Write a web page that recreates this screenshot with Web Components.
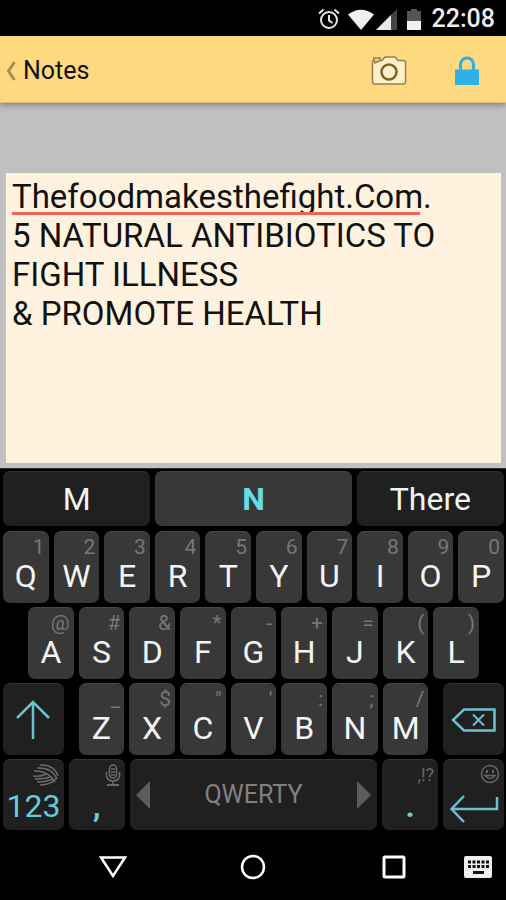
<!DOCTYPE html>
<html lang="en">
<head>
<meta charset="utf-8">
<meta name="viewport" content="width=device-width, initial-scale=1">
<title>Notes</title>
<style>
  body{ margin:0; background:#000; font-family:Roboto,sans-serif }
</style>
</head>
<body>
<notes-app>
  <status-bar slot="status" time="22:08"></status-bar>
  <app-bar slot="bar" back="Notes"></app-bar>
  <note-editor></note-editor>
  <soft-keyboard slot="keyboard"></soft-keyboard>
  <nav-bar slot="nav"></nav-bar>
</notes-app>

<script>
const ICONS = {
  alarm: [22, 22, `<g fill="none" stroke="#e4e4e4" stroke-width="2"><circle cx="11" cy="12" r="8"/><path d="M11 7v5.500l3.500 2.500M1 5.500l4.500-4M21 5.500l-4.500-4"/></g>`],
  wifi: [26, 21, `<path d="M0 5.500Q13-4 26 5.500L13 21z" fill="#f0f0f0"/>`],
  signal: [21, 21, `<path d="M21 0v21H0z" fill="#444"/><path d="M15 6v15H0z" fill="#e8e8e8"/>`],
  battery: [14, 21, `<path d="M4 0h6v2h4v10H0V2h4z" fill="#555"/><path d="M0 12h14v9H0z" fill="#f0f0f0"/>`],
  back: [10, 20, `<path d="M8.500 1L2.500 10l6 9" fill="none" stroke="#a58c58" stroke-width="3"/>`],
  camera: [36, 30, `<g stroke="#97804c" stroke-width="1.500" fill="#fff0ca"><path d="M3 4.500h8L14 1h10l3 3.500h5.500q2 0 2 2V26q0 2-2 2h-29q-2 0-2-2V6.500q0-2 1.500-2z"/><path d="M3 4V2h6v2.500L4 7z" fill="#e8d29a"/><circle cx="18" cy="16" r="7.500" stroke="#7d6426" stroke-width="2.500"/></g>`],
  lock: [24, 29, `<path d="M5.500 14V8.500a6.500 6.500 0 0 1 13 0V14" fill="none" stroke="#2fb1e6" stroke-width="3.200"/><path d="M0 13.500h24V29H0z" fill="#2fb1e6"/>`],
  shift: [36, 40, `<path d="M18 39V2M2 18L18 2l16 16" fill="none" stroke="#68c3cf" stroke-width="2.500"/>`],
  erase: [45, 24, `<g fill="none" stroke="#68c3cf" stroke-width="2.500"><path d="M13 1.500h30.500v21H13L2 12z"/><path d="M22 6.500l11 11M33 6.500l-11 11" stroke-width="2"/></g>`],
  enter: [50, 32, `<path d="M48 3v12H2M15 2L2.500 15 15 28" fill="none" stroke="#68c3cf" stroke-width="2.500"/>`],
  swirl: [28, 22, `<g fill="none" stroke="#6a6a6a" stroke-width="1.500"><path d="M8 1Q22 0 26 12"/><path d="M5 4q15-1 20 11"/><path d="M2 7q14-1 21 11"/><path d="M1 12q8 1 13-2"/><path d="M3 15q9 0 15-2"/><path d="M5 18q9 0 16-3"/><path d="M8 21q11 0 17-7"/></g>`],
  mic: [16, 22, `<g fill="none" stroke="#6a6a6a" stroke-width="1.500"><rect x="4.500" y="1" width="7" height="13" rx="3.500"/><path d="M6 5h4M6 8h4M6 11h4M1.500 8v4q1 5 6.500 5t6.500-5V8M8 17v4"/><path d="M2 21h12" stroke-width="2"/></g>`],
  smile: [20, 20, `<g fill="none" stroke="#666" stroke-width="1.500"><circle cx="10" cy="10" r="8.500"/><path d="M5 11.500q5 6 10 0z"/></g><path d="M6 6h2v3H6zM12 6h2v3h-2z" fill="#666"/>`],
  left: [14, 28, `<path d="M14 0v28L0 14z" fill="#5c5c5c"/>`],
  right: [14, 28, `<path d="M0 0v28l14-14z" fill="#5c5c5c"/>`],
  navback: [30, 24, `<path d="M3 2.500h24L15 21z" fill="none" stroke="#fff" stroke-width="2.500"/>`],
  home: [26, 26, `<circle cx="13" cy="13" r="11" fill="none" stroke="#fff" stroke-width="2.500"/>`],
  recent: [24, 24, `<rect x="2" y="2" width="20" height="20" rx="1" fill="none" stroke="#fff" stroke-width="3"/>`],
  keyboard: [28, 22, `<rect width="28" height="22" rx="2" fill="#eee"/><path d="M4 6h21M4 10.500h21" stroke="#111" stroke-width="3" stroke-dasharray="3 1.500"/><path d="M9 16.500h11" stroke="#111" stroke-width="3"/>`]
};

class GlyphIcon extends HTMLElement{
  constructor(){ super(); this.attachShadow({mode:'open'}); }
  connectedCallback(){
    const [w, h, body] = ICONS[this.getAttribute('name')];
    this.shadowRoot.innerHTML = `
      <style>:host{ display:block; flex:none } svg{ display:block }</style>
      <svg width="${w}" height="${h}" viewBox="0 0 ${w} ${h}" aria-hidden="true">${body}</svg>
    `;
  }
}
customElements.define('glyph-icon', GlyphIcon);

class NotesApp extends HTMLElement{
  constructor(){
    super();
    this.attachShadow({mode:'open'}).innerHTML = `
      <style>
        :host{ display:flex; flex-direction:column; min-height:100vh; background:#c0c0c0 }
        main{ flex:1; display:flex; flex-direction:column; padding:70px 5px 5px 6px }
      </style>
      <slot name="status"></slot>
      <slot name="bar"></slot>
      <main><slot></slot></main>
      <slot name="keyboard"></slot>
      <slot name="nav"></slot>
    `;
  }
}
customElements.define('notes-app', NotesApp);

class StatusBar extends HTMLElement{
  constructor(){ super(); this.attachShadow({mode:'open'}); }
  connectedCallback(){
    this.shadowRoot.innerHTML = `
      <style>
        :host{ display:flex; align-items:center; justify-content:flex-end; box-sizing:border-box; height:36px; padding:2px 11px 0 0; background:#000; color:#eee }
        .icons{ display:flex; align-items:center; gap:2px; margin-right:11px }
        .battery{ margin-left:8px }
        .alarm{ margin-right:6px }
        time{ font-size:25px; font-weight:500; line-height:36px }
      </style>
      <div class="icons">
        <glyph-icon class="alarm" name="alarm"></glyph-icon>
        <glyph-icon name="wifi"></glyph-icon>
        <glyph-icon name="signal"></glyph-icon>
        <glyph-icon class="battery" name="battery"></glyph-icon>
      </div>
      <time>${this.getAttribute('time')}</time>
    `;
  }
}
customElements.define('status-bar', StatusBar);

class AppBar extends HTMLElement{
  constructor(){ super(); this.attachShadow({mode:'open'}); }
  connectedCallback(){
    this.shadowRoot.innerHTML = `
      <style>
        :host{ display:flex; align-items:center; justify-content:space-between; box-sizing:border-box; height:67px; padding:3px 27px 0 6px; background:#ffd980; border-bottom:1px solid #e2bd70; box-shadow:0 2px 6px rgba(0,0,0,.35) }
        a{ display:flex; align-items:center; gap:7px; color:#111; font-size:25px; line-height:32px; text-decoration:none }
        .actions{ display:flex; align-items:center; gap:48px }
        button{ padding:0; border:0; background:none }
      </style>
      <a href="#notes"><glyph-icon name="back"></glyph-icon>${this.getAttribute('back')}</a>
      <div class="actions">
        <button aria-label="Camera"><glyph-icon name="camera"></glyph-icon></button>
        <button aria-label="Lock"><glyph-icon name="lock"></glyph-icon></button>
      </div>
    `;
  }
}
customElements.define('app-bar', AppBar);

class NoteEditor extends HTMLElement{
  constructor(){
    super();
    this.attachShadow({mode:'open'}).innerHTML = `
      <style>
        :host{ position:relative; flex:1; display:flex; background:#fff3df }
        textarea{ flex:1; min-width:0; box-sizing:border-box; padding:4px 6px; border:0; outline:0; resize:none; background:none; color:#111; font:33px/39px Roboto,sans-serif }
        /* spelling mark below the first word */
        .mark{ position:absolute; left:6px; top:39px; width:408px; height:3px; background:#f4605c }
      </style>
      <textarea aria-label="Note" spellcheck="false">Thefoodmakesthefight.Com.
5 NATURAL ANTIBIOTICS TO FIGHT ILLNESS
&amp; PROMOTE HEALTH</textarea>
      <span class="mark"></span>
    `;
  }
}
customElements.define('note-editor', NoteEditor);

// One key. The slot takes an icon in place of the label.
class SoftKey extends HTMLElement{
  constructor(){ super(); this.attachShadow({mode:'open'}); }
  connectedCallback(){
    const label = this.getAttribute('label') ?? '';
    const hint = this.getAttribute('hint') ?? '';
    const name = this.getAttribute('name') ?? label;
    this.shadowRoot.innerHTML = `
      <style>
        :host{ display:block; min-width:0 }
        button{ position:relative; display:flex; align-items:flex-end; justify-content:center; box-sizing:border-box; width:100%; height:100%; padding:0 0 7px; border:0; border-top:1px solid #484848; border-radius:7px; background:#383838; color:#f4f4f4; font:32px/40px Roboto,sans-serif }
        :host([dark]) button{ background:#202020; border-top-color:#333; color:#68cbd8 }
        :host([dark]) button{ padding-bottom:4px }
        :host([center]) button{ align-items:center; padding:0 }
        :host([strong]) button{ font-weight:700 }
        .hint{ position:absolute; top:2px; right:4px; color:#777; font-size:21px; font-weight:400; line-height:26px }
        :host([dark]) .hint{ color:#666; font-size:18px }
        ::slotted([slot=hint]){ margin-top:2px }
      </style>
      <button aria-label="${name}">${label}<slot></slot><span class="hint">${hint.replace('&', '&amp;')}<slot name="hint"></slot></span></button>
    `;
  }
}
customElements.define('soft-key', SoftKey);

class SpaceKey extends HTMLElement{
  constructor(){
    super();
    this.attachShadow({mode:'open'}).innerHTML = `
      <style>
        :host{ display:block }
        button{ display:flex; align-items:center; justify-content:space-between; box-sizing:border-box; width:100%; height:100%; padding:0 6px; border:0; border-top:1px solid #333; border-radius:7px; background:#202020; color:#808080; font:25px/32px Roboto,sans-serif }
      </style>
      <button><glyph-icon name="left"></glyph-icon>QWERTY<glyph-icon name="right"></glyph-icon></button>
    `;
  }
}
customElements.define('space-key', SpaceKey);

class SoftKeyboard extends HTMLElement{
  constructor(){ super(); this.attachShadow({mode:'open'}); }
  keys(letters, hints){
    return [...letters].map((l, i)=> `<soft-key label="${l}" hint="${hints[i].replace('&','&amp;').replace('"','&quot;')}"></soft-key>`).join('');
  }
  connectedCallback(){
    this.shadowRoot.innerHTML = `
      <style>
        :host{ display:block; padding:2px 2px 0 3px; background:#000; border-top:1px solid #333 }
        .words{ display:grid; grid-template-columns:3fr 4fr 3fr; gap:5px; height:55px; margin-bottom:5px }
        .words button{ padding:0; border:0; border-top:1px solid #333; border-radius:7px; background:#202020; color:#f4f4f4; font:32px/40px Roboto,sans-serif }
        .words .best{ background:#383838; border-top-color:#484848; color:#68dce6; font-weight:700 }
        .rows{ display:grid; grid-template-rows:repeat(3,72px) 71px; gap:4px }
        .row{ display:grid; gap:5px }
        .top{ grid-template-columns:repeat(10,1fr) }
        .home{ grid-template-columns:repeat(9,1fr); padding:0 25px }
        .low{ grid-template-columns:71fr repeat(7,46fr) 71fr }
        .last{ grid-template-columns:61fr 56fr 248fr 56fr 61fr }
        .shift{ margin-right:10px }
        .erase{ margin-left:10px }
      </style>
      <div class="words"><button>M</button><button class="best">N</button><button>There</button></div>
      <div class="rows">
        <div class="row top">${this.keys('QWERTYUIOP', '1234567890')}</div>
        <div class="row home">${this.keys('ASDFGHJKL', '@#&*-+=()')}</div>
        <div class="row low">
          <soft-key class="shift" dark center name="Shift"><glyph-icon name="shift"></glyph-icon></soft-key>
          ${this.keys('ZXCVBNM', `_$"':;/`)}
          <soft-key class="erase" dark center name="Delete"><glyph-icon name="erase"></glyph-icon></soft-key>
        </div>
        <div class="row last">
          <soft-key dark label="123"><glyph-icon slot="hint" name="swirl"></glyph-icon></soft-key>
          <soft-key dark strong label=","><glyph-icon slot="hint" name="mic"></glyph-icon></soft-key>
          <space-key></space-key>
          <soft-key dark strong label="." hint=",!?"></soft-key>
          <soft-key dark name="Enter"><glyph-icon name="enter"></glyph-icon><glyph-icon slot="hint" name="smile"></glyph-icon></soft-key>
        </div>
      </div>
    `;
  }
}
customElements.define('soft-keyboard', SoftKeyboard);

class NavBar extends HTMLElement{
  constructor(){
    super();
    this.attachShadow({mode:'open'}).innerHTML = `
      <style>
        :host{ display:grid; grid-template-columns:43px 1fr 1fr 1fr 42px; align-items:center; box-sizing:border-box; height:70px; padding-top:3px; background:#000 }
        button{ justify-self:center; padding:0; border:0; background:none }
        .back{ grid-column:2 }
        .ime{ justify-self:start }
      </style>
      <button class="back" aria-label="Back"><glyph-icon name="navback"></glyph-icon></button>
      <button aria-label="Home"><glyph-icon name="home"></glyph-icon></button>
      <button aria-label="Recent apps"><glyph-icon name="recent"></glyph-icon></button>
      <button class="ime" aria-label="Switch keyboard"><glyph-icon name="keyboard"></glyph-icon></button>
    `;
  }
}
customElements.define('nav-bar', NavBar);
</script>
</body>
</html>
